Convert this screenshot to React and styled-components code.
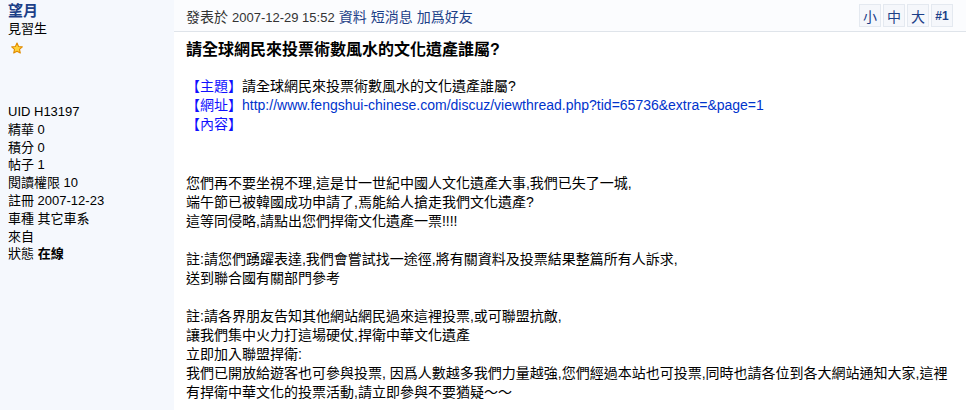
import React from 'react'
import styled, { createGlobalStyle } from 'styled-components'

const Global = createGlobalStyle`
  html, body { margin: 0; padding: 0; background: #fff; }
  body {
    font-family: "Liberation Sans", "Noto Sans CJK TC", sans-serif;
    font-size: 12px;
    color: #000;
  }
`

const Page = styled.div`
  display: flex;
  width: 966px;
  height: 410px;
  overflow: hidden;
`

const Sidebar = styled.div`
  width: 174px;
  flex-shrink: 0;
  background: #f5f8fd;
  padding: 2px 8px;
  box-sizing: border-box;
  font-size: 13px;
`

const Name = styled.div`
  color: #1c4088;
  font-weight: 700;
  font-size: 15px;
  line-height: 18px;
`

const Rank = styled.div`
  line-height: 17px;
`

const Star = styled.svg`
  display: block;
  margin: 5px 0 0 2px;
`

const Stats = styled.div`
  margin-top: 48px;
  line-height: 17.8px;
`

const Main = styled.div`
  flex: 1;
  display: flex;
  flex-direction: column;
`

const Header = styled.div`
  height: 31px;
  display: flex;
  align-items: center;
  justify-content: space-between;
  padding: 0 13px 0 12px;
  border-bottom: 1px solid #dfe4ea;
  background: #fbfcfe;
  color: #333;
  font-size: 14px;
`

const Meta = styled.div`
  display: flex;
  align-items: baseline;
  gap: 4px;
`

const Date = styled.span`
  font-size: 13px;
`

const Link = styled.span`
  color: ${(p) => p.color || '#1c4088'};
`

const Sizes = styled.div`
  display: flex;
  gap: 2px;
`

const SizeBtn = styled.span`
  width: 20px;
  height: 21px;
  display: flex;
  align-items: center;
  justify-content: center;
  border: 1px solid #e4e9f0;
  background: #f5f7fb;
  color: #1c4088;
  font-size: ${(p) => (p.bold ? 12 : 14)}px;
  font-weight: ${(p) => (p.bold ? 700 : 400)};
`

const Body = styled.div`
  padding: 8px 12px;
  font-size: 14px;
  line-height: 19px;
`

const Title = styled.div`
  font-size: 16px;
  font-weight: 700;
  line-height: 20px;
  margin-bottom: 17px;
`

const Label = styled.span`
  color: #1010ff;
`

const Para = styled.div`
  margin-top: ${(p) => p.gap || 0}px;
  white-space: nowrap;
`

export default function App() {
  return (
    <Page>
      <Global />
      <Sidebar>
        <Name>望月</Name>
        <Rank>見習生</Rank>
        <Star width="14" height="13" viewBox="0 0 24 24">
          <path
            d="M12 2l2.9 6.3 6.9.7-5.2 4.6 1.5 6.8L12 17l-6.1 3.4 1.5-6.8L2.2 9l6.9-.7z"
            fill="#ffd23a"
            stroke="#e08a00"
            strokeWidth="2"
            strokeLinejoin="round"
          />
        </Star>
        <Stats>
          <div>UID H13197</div>
          <div>精華 0</div>
          <div>積分 0</div>
          <div>帖子 1</div>
          <div>閱讀權限 10</div>
          <div>註冊 2007-12-23</div>
          <div>車種 其它車系</div>
          <div>來自</div>
          <div>狀態 <b>在線</b></div>
        </Stats>
      </Sidebar>
      <Main>
        <Header>
          <Meta>
            <span>發表於</span>
            <Date>2007-12-29 15:52</Date>
            <Link>資料</Link>
            <Link>短消息</Link>
            <Link>加爲好友</Link>
          </Meta>
          <Sizes>
            <SizeBtn>小</SizeBtn>
            <SizeBtn>中</SizeBtn>
            <SizeBtn>大</SizeBtn>
            <SizeBtn bold>#1</SizeBtn>
          </Sizes>
        </Header>
        <Body>
          <Title>請全球網民來投票術數風水的文化遺產誰屬?</Title>
          <Para><Label>【主題】</Label>請全球網民來投票術數風水的文化遺產誰屬?</Para>
          <Para>
            <Label>【網址】</Label>
            <Link color="#0033cc">http://www.fengshui-chinese.com/discuz/viewthread.php?tid=65736&amp;extra=&amp;page=1</Link>
          </Para>
          <Para><Label>【內容】</Label></Para>
          <Para gap={40}>
            您們再不要坐視不理,這是廿一世紀中國人文化遺產大事,我們已失了一城,<br />
            端午節已被韓國成功申請了,焉能給人搶走我們文化遺產?<br />
            這等同侵略,請點出您們捍衛文化遺產一票!!!!
          </Para>
          <Para gap={19}>
            註:請您們踴躍表達,我們會嘗試找一途徑,將有關資料及投票結果整篇所有人訴求,<br />
            送到聯合國有關部門參考
          </Para>
          <Para gap={19}>
            註:請各界朋友告知其他網站網民過來這裡投票,或可聯盟抗敵,<br />
            讓我們集中火力打這場硬仗,捍衛中華文化遺產<br />
            立即加入聯盟捍衛:<br />
            我們已開放給遊客也可參與投票, 因爲人數越多我們力量越強,您們經過本站也可投票,同時也請各位到各大網站通知大家,這裡<br />
            有捍衛中華文化的投票活動,請立即參與不要猶疑～～
          </Para>
        </Body>
      </Main>
    </Page>
  )
}
